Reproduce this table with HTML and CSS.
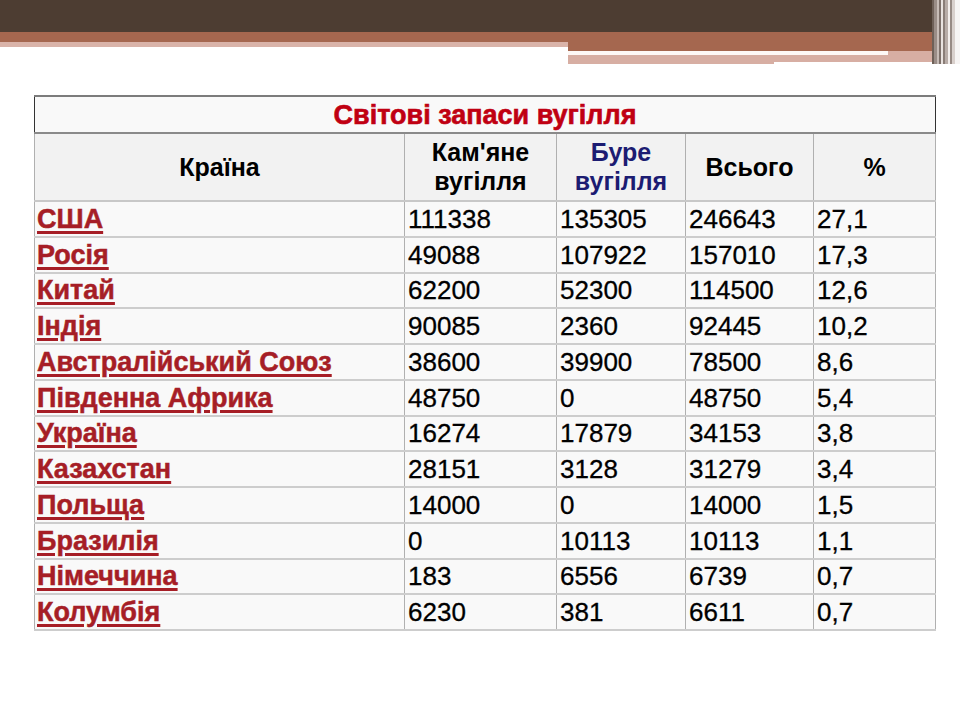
FILE: index.html
```html
<!DOCTYPE html>
<html lang="uk">
<head>
<meta charset="utf-8">
<title>Світові запаси вугілля</title>
<link rel="stylesheet" href="styles.css">
</head>
<body>
<header class="banner">
  <div class="banner-main">
    <div class="band-dark"></div>
    <div class="band-terra"></div>
    <div class="band-split">
      <div class="split-left"><div class="pink-thin"></div></div>
      <div class="split-right">
        <div class="terra-ext"></div>
        <div class="line-row"><div class="white-line"></div><div class="pink-fill"></div></div>
        <div class="pink-block"></div>
        <div class="pink-tail"></div>
      </div>
    </div>
  </div>
  <div class="banner-stripes"></div>
</header>
<main class="content">
  <table class="coal">
    <colgroup>
      <col class="c1"><col class="c2"><col class="c3"><col class="c4"><col class="c5">
    </colgroup>
    <tr class="title-row"><th colspan="5">Світові запаси вугілля</th></tr>
    <tr class="head-row">
      <th>Країна</th>
      <th>Кам'яне<br>вугілля</th>
      <th class="brown">Буре<br>вугілля</th>
      <th>Всього</th>
      <th>%</th>
    </tr>
    <tr><td class="country"><span class="link">США</span></td><td>111338</td><td>135305</td><td>246643</td><td>27,1</td></tr>
    <tr><td class="country"><span class="link">Росія</span></td><td>49088</td><td>107922</td><td>157010</td><td>17,3</td></tr>
    <tr><td class="country"><span class="link">Китай</span></td><td>62200</td><td>52300</td><td>114500</td><td>12,6</td></tr>
    <tr><td class="country"><span class="link">Індія</span></td><td>90085</td><td>2360</td><td>92445</td><td>10,2</td></tr>
    <tr><td class="country"><span class="link">Австралійський Союз</span></td><td>38600</td><td>39900</td><td>78500</td><td>8,6</td></tr>
    <tr><td class="country"><span class="link">Південна Африка</span></td><td>48750</td><td>0</td><td>48750</td><td>5,4</td></tr>
    <tr><td class="country"><span class="link">Україна</span></td><td>16274</td><td>17879</td><td>34153</td><td>3,8</td></tr>
    <tr><td class="country"><span class="link">Казахстан</span></td><td>28151</td><td>3128</td><td>31279</td><td>3,4</td></tr>
    <tr><td class="country"><span class="link">Польща</span></td><td>14000</td><td>0</td><td>14000</td><td>1,5</td></tr>
    <tr><td class="country"><span class="link">Бразилія</span></td><td>0</td><td>10113</td><td>10113</td><td>1,1</td></tr>
    <tr><td class="country"><span class="link">Німеччина</span></td><td>183</td><td>6556</td><td>6739</td><td>0,7</td></tr>
    <tr><td class="country"><span class="link">Колумбія</span></td><td>6230</td><td>381</td><td>6611</td><td>0,7</td></tr>
  </table>
</main>
</body>
</html>
```
FILE: styles.css
```css
html, body {
  margin: 0;
  padding: 0;
  background: #ffffff;
  font-family: "Liberation Sans", Arial, sans-serif;
}

.banner {
  display: flex;
  height: 64px;
}
.banner-main {
  width: 932px;
  display: flex;
  flex-direction: column;
}
.band-dark {
  height: 32px;
  background: #4d3d32;
}
.band-terra {
  height: 10px;
  background: #a5674f;
}
.band-split {
  display: flex;
  flex: 1;
}
.split-left {
  width: 568px;
}
.pink-thin {
  height: 5px;
  background: #d9b3a9;
}
.split-right {
  flex: 1;
  display: flex;
  flex-direction: column;
}
.terra-ext {
  height: 9px;
  background: #a5674f;
}
.line-row {
  display: flex;
  height: 4px;
}
.white-line {
  width: 320px;
  background: #fdf8f6;
}
.pink-fill {
  flex: 1;
  background: #d7aea3;
}
.pink-block {
  height: 7px;
  background: #d7aea3;
}
.pink-tail {
  height: 2px;
  width: 206px;
  background: #d7aea3;
}
.banner-stripes {
  flex: 1;
  background: linear-gradient(to right,
    #6e6058 0, #6e6058 2px,
    #9a8d87 2px, #9a8d87 5px,
    #c7bcb7 5px, #c7bcb7 7px,
    #7d706a 7px, #7d706a 9px,
    #e9e2df 9px, #e9e2df 11px,
    #8a7d77 11px, #8a7d77 13px,
    #b8aca7 13px, #b8aca7 16px,
    #f3eeec 16px, #f3eeec 18px,
    #978a84 18px, #978a84 20px,
    #d9d0cc 20px, #d9d0cc 23px,
    #f7f4f3 23px, #f7f4f3 28px);
}

.content {
  padding: 31px 0 0 34px;
}

.coal {
  border-collapse: collapse;
  table-layout: fixed;
  width: 901px;
  background: #f9f9f9;
  border-top: 2px solid #7c7c7c;
  border-left: 1px solid #b0b0b0;
  border-right: 1px solid #b0b0b0;
}
.c1 { width: 370px; }
.c2 { width: 152px; }
.c3 { width: 129px; }
.c4 { width: 128px; }
.c5 { width: 122px; }

.title-row th {
  height: 35px;
  padding: 0;
  font-size: 27px;
  font-weight: bold;
  color: #c00012;
  -webkit-text-stroke: 0.6px #c00012;
  text-align: center;
  line-height: 30px;
  border-left: 1px solid #333333;
  border-right: 1px solid #333333;
  border-bottom: 2px solid #8a8a8a;
}

.head-row th {
  height: 66px;
  padding: 0;
  background: #f2f2f2;
  font-size: 25px;
  font-weight: bold;
  color: #000000;
  text-align: center;
  line-height: 29px;
  border-left: 1px solid #b0b0b0;
  border-bottom: 2px solid #c8c8c8;
}
.head-row th:first-child { border-left: none; }
.head-row th.brown { color: #1c1c72; }

.coal td {
  height: 33.75px;
  padding: 0 0 0 3px;
  font-size: 26px;
  line-height: 30px;
  color: #000000;
  -webkit-text-stroke: 0.3px #000000;
  border-left: 1px solid #b0b0b0;
  border-bottom: 2px solid #cdcdcd;
  vertical-align: middle;
  white-space: nowrap;
}
.coal td.country {
  border-left: none;
  padding-left: 2px;
  font-size: 27px;
  font-weight: bold;
  color: #a61e26;
  -webkit-text-stroke: 0.5px #a61e26;
}
.link {
  text-decoration: underline;
  text-decoration-thickness: 3px;
  text-underline-offset: 3px;
}
```
